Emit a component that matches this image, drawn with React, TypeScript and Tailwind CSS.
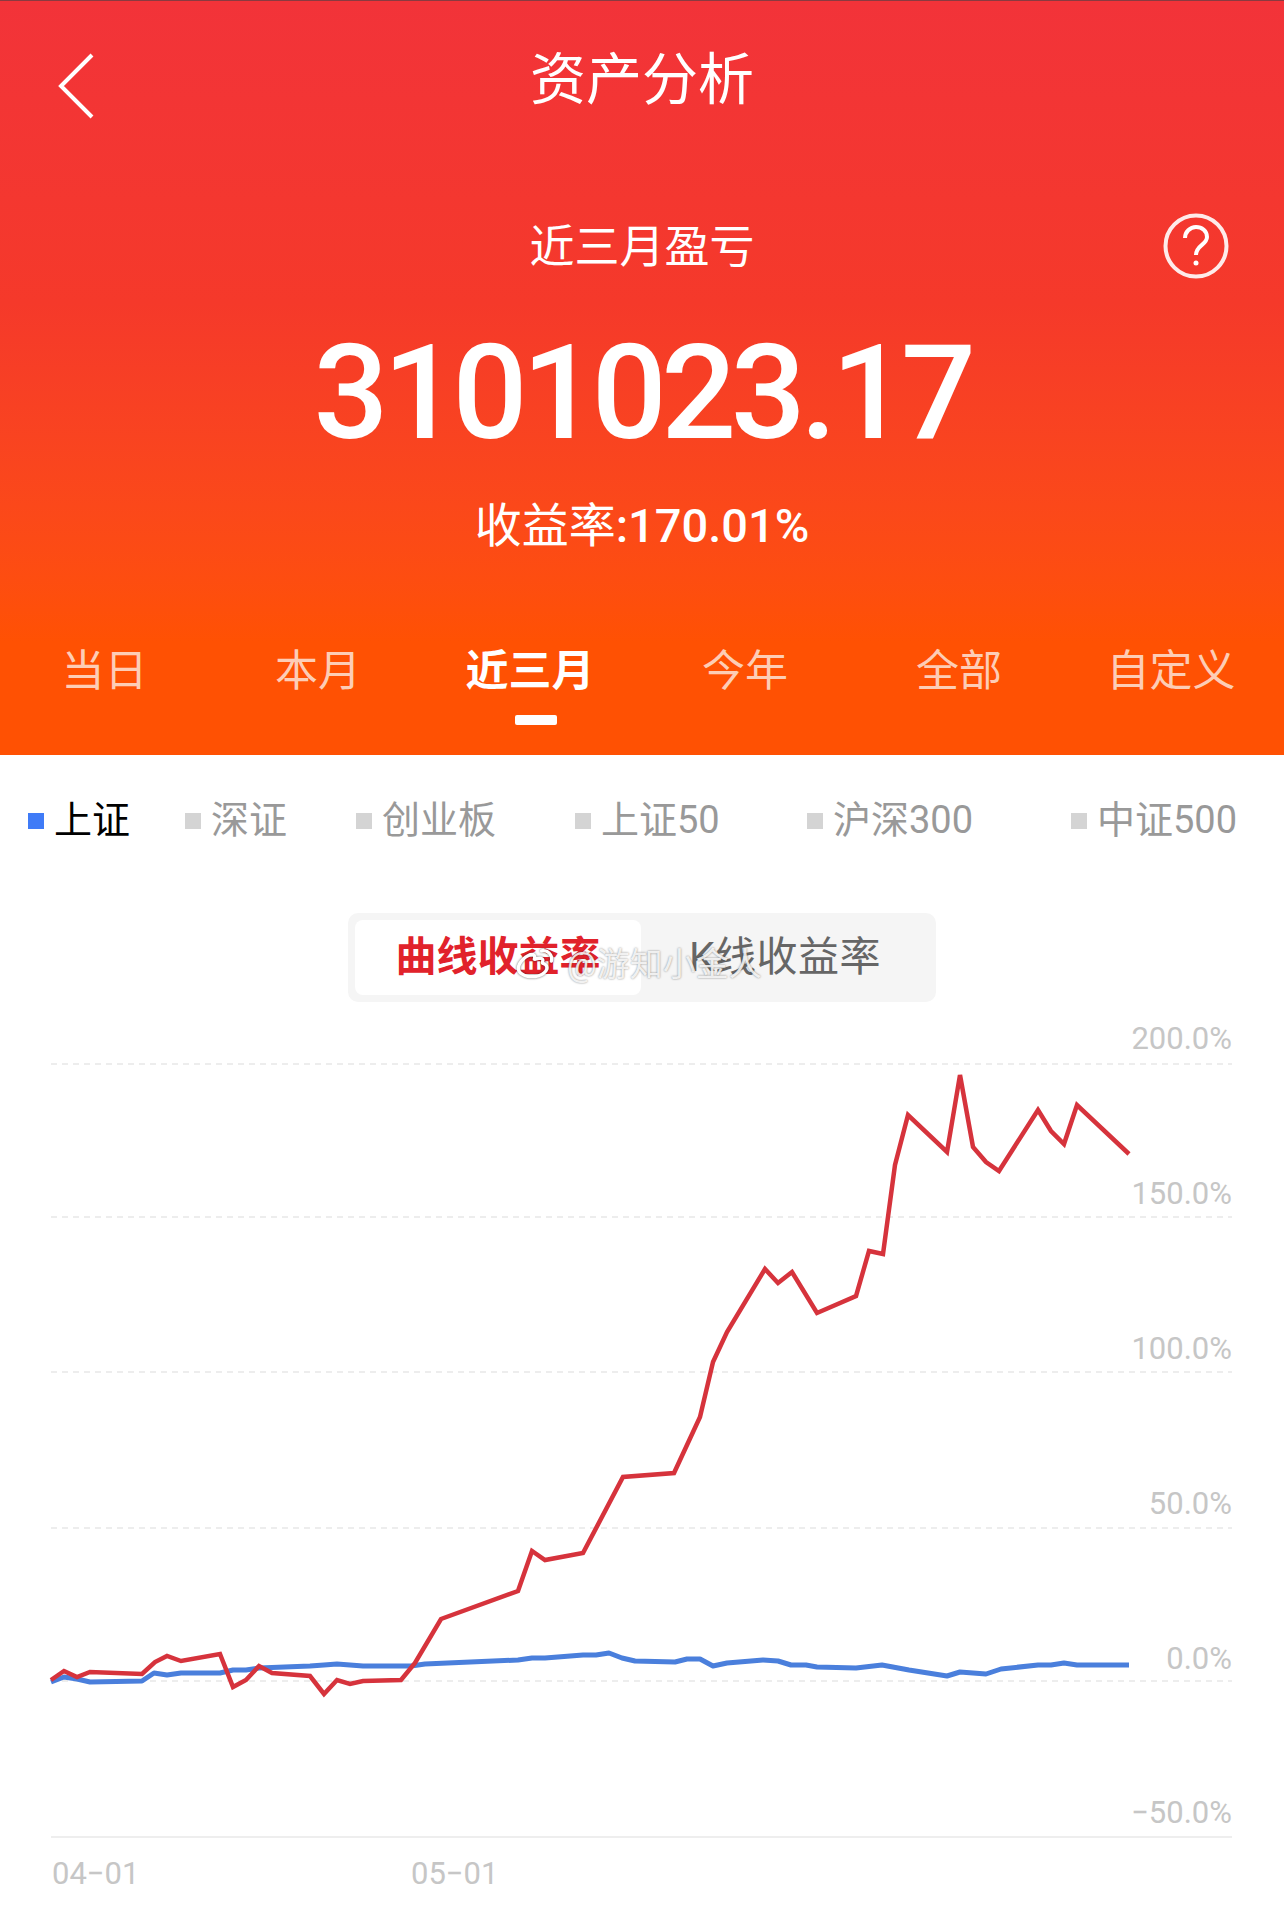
import { RiWeiboLine } from 'react-icons/ri'

const tabs = ['当日', '本月', '近三月', '今年', '全部', '自定义']
const markets = ['上证', '深证', '创业板', '上证50', '沪深300', '中证500']

const redLine =
  '51,1680 64,1671 77,1677 90,1672 142,1674 155,1662 167,1656 181,1661 220,1654 233,1687 246,1680 259,1666 272,1673 310,1676 324,1694 337,1680 350,1684 363,1681 401,1680 415,1663 441,1619 518,1591 532,1551 545,1560 583,1553 623,1477 674,1473 700,1417 713,1362 727,1332 765,1269 778,1283 792,1272 817,1313 856,1296 869,1251 883,1254 895,1165 908,1115 947,1152 960,1075 973,1147 986,1162 999,1171 1038,1110 1051,1131 1064,1144 1077,1105 1129,1154'
const blueLine =
  '51,1682 64,1677 77,1679 90,1682 142,1681 154,1673 167,1675 181,1673 220,1673 233,1670 246,1670 259,1668 310,1666 324,1665 337,1664 363,1666 411,1666 425,1664 518,1660 532,1658 545,1658 583,1655 596,1655 609,1653 622,1658 635,1661 675,1662 687,1659 700,1659 713,1666 727,1663 763,1660 778,1661 791,1665 806,1665 817,1667 856,1668 882,1665 909,1670 947,1676 960,1672 986,1674 1001,1669 1038,1665 1051,1665 1064,1663 1077,1665 1129,1665'

const yAxis = [
  { label: '200.0%', grid: 1064, text: 1049 },
  { label: '150.0%', grid: 1217, text: 1204 },
  { label: '100.0%', grid: 1372, text: 1359 },
  { label: '50.0%', grid: 1528, text: 1514 },
  { label: '0.0%', grid: 1681, text: 1669 },
  { label: '−50.0%', grid: 0, text: 1823 },
]

export default function App() {
  return (
    <div className="w-[1284px] h-[1928px] bg-white overflow-hidden relative font-['Roboto','Noto_Sans_CJK_SC',sans-serif]">
      {/* Header */}
      <header className="h-[755px] border-t border-[#8a3a40] bg-gradient-to-b from-[#f23339] via-[#f5392a] via-40% to-[#ff5103] to-85% text-white">
        <div className="relative h-[160px] flex items-center justify-center pb-[2px]">
          <svg className="absolute left-[57px] top-[51px]" width="38" height="68" viewBox="0 0 38 68" fill="none">
            <path d="M35 3 L4 34 L35 65" stroke="white" strokeWidth="4" />
          </svg>
          <h1 className="text-[56px] leading-none">资产分析</h1>
        </div>
        <div className="relative flex justify-center h-[100px] pt-[64px]">
          <p className="text-[45px] leading-none">近三月盈亏</p>
          <svg className="absolute left-[1163px] top-[52px]" width="66" height="66" viewBox="0 0 66 66" fill="none">
            <circle cx="33" cy="33" r="30.5" stroke="white" strokeWidth="4" opacity="0.9" />
            <path d="M22 25c0-6 5-11 11-11s11 4 11 10c0 8-11 8-11 18" stroke="white" strokeWidth="4" />
            <circle cx="33" cy="50" r="2.500" fill="white" />
          </svg>
        </div>
        <div className="text-center text-[132px] leading-none font-medium tracking-[-5.5px] mt-[66px]">3101023.17</div>
        <div className="text-center text-[47px] leading-none mt-[43px]">
          收益率<span className="font-medium">:170.01%</span>
        </div>
        <nav className="grid grid-cols-[209px_218px_206px_224px_204px_1fr] pr-[3px] mt-[101px]">
          {tabs.map((tab, i) => (
            <div key={tab} className="flex flex-col items-center">
              <span className={i === 2 ? 'text-[43px] leading-none font-bold text-white' : 'text-[43px] leading-none text-[#fdcdb6]'}>
                {tab}
              </span>
              {i === 2 && <span className="w-[42px] h-[10px] rounded-[2px] bg-white mt-[22px] ml-[11px]" />}
            </div>
          ))}
        </nav>
      </header>

      {/* Market filter */}
      <div className="grid grid-cols-[157px_171px_219px_232px_264px_1fr] pl-[28px] mt-[47px]">
        {markets.map((m, i) => (
          <div key={m} className="flex items-center gap-[10px]">
            <span className={i === 0 ? 'w-4 h-4 bg-[#3f7bf7]' : 'w-4 h-4 bg-[#d4d4d4]'} />
            <span className={i === 0 ? 'text-[38px] leading-[37px] text-black' : 'text-[38px] leading-[37px] text-[#999]'}>{m}</span>
          </div>
        ))}
      </div>

      {/* Curve / K-line toggle */}
      <div className="w-[588px] h-[89px] mt-[74px] ml-[348px] p-[7px] rounded-[10px] bg-[#f5f5f5] flex">
        <div className="w-[286px] rounded-[8px] bg-white flex items-center justify-center text-[41px] font-bold text-[#e1222b]">曲线收益率</div>
        <div className="flex-1 flex items-center justify-center text-[41px] tracking-[0.5px] text-[#666]">K线收益率</div>
      </div>

      {/* Watermark */}
      <div className="absolute left-[515px] top-[944px] flex items-center gap-[12px] text-[33px] leading-none text-white/85 [text-shadow:0_0_2px_rgba(0,0,0,0.5)]">
        <RiWeiboLine size={40} className="text-white drop-shadow-[0_0_1px_rgba(0,0,0,0.6)]" />
        <span>@游知小金人</span>
      </div>

      {/* Chart */}
      <svg className="absolute left-0 top-[1010px]" width="1284" height="918" viewBox="0 1010 1284 918" fill="none">
        {yAxis.filter(t => t.grid > 0).map(t => (
          <line key={t.label} x1="51" x2="1232" y1={t.grid} y2={t.grid} stroke="#ededed" strokeWidth="2" strokeDasharray="6 5" />
        ))}
        <line x1="51" x2="1232" y1="1837" y2="1837" stroke="#eeeeee" strokeWidth="2" />
        {yAxis.map(t => (
          <text key={t.label} x="1232" y={t.text} textAnchor="end" className="text-[31px] fill-[#c6c6c6]">{t.label}</text>
        ))}
        <text x="52" y="1884" className="text-[31px] fill-[#c6c6c6]">04−01</text>
        <text x="411" y="1884" className="text-[31px] fill-[#c6c6c6]">05−01</text>
        <polyline points={blueLine} stroke="#4a7fdc" strokeWidth="5" strokeLinejoin="round" />
        <polyline points={redLine} stroke="#d6333c" strokeWidth="4.500" strokeLinejoin="miter" />
      </svg>
    </div>
  )
}
